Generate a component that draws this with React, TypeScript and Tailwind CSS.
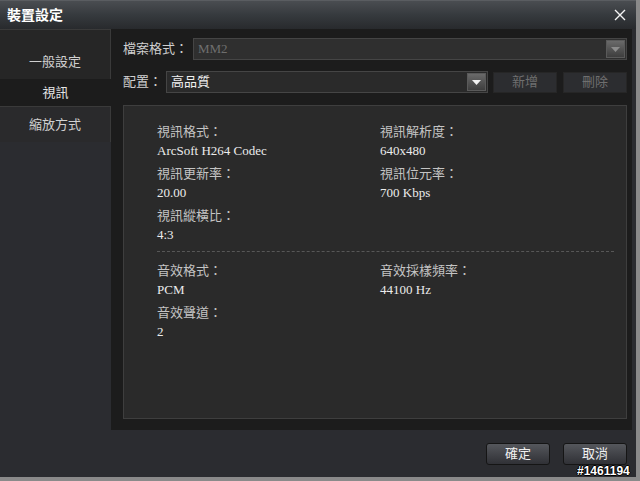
const font = { fontFamily: '"Liberation Serif", "Noto Sans CJK TC", serif' }

function Arrow({ disabled }: { disabled?: boolean }) {
  return (
    <div className="flex items-center justify-center w-[19px] h-[18px] border border-[#5a5a5a] bg-gradient-to-b from-[#6a6a6a] to-[#3e3e3e]">
      <svg width="9" height="5" viewBox="0 0 9 5">
        <path d="M0 0h9L4.5 5z" fill={disabled ? '#8c8c8c' : '#f2f2f2'} />
      </svg>
    </div>
  )
}

function Info({ label, value }: { label: string; value: string }) {
  return (
    <div className="leading-[19px]">
      <div className="text-[#c4c4c4]">{label}</div>
      <div className="text-[#ececec]">{value}</div>
    </div>
  )
}

function FooterButton({ children }: { children: string }) {
  return (
    <button className="w-[64px] h-[22px] rounded-[3px] border border-[#151515] bg-gradient-to-b from-[#55575c] to-[#303136] text-[#f0f0f0] text-[13px] flex items-center justify-center">
      {children}
    </button>
  )
}

export default function App() {
  return (
    <div className="relative w-[640px] h-[481px] bg-[#8a8a8a] overflow-hidden text-[13px]" style={font}>
      <div className="w-[636px] h-[477px] bg-[#2b2c30] flex flex-col">
        {/* title bar */}
        <div className="h-[29px] flex items-center justify-between pl-[7px] pr-[10px] bg-gradient-to-b from-[#4a4d51] via-[#363a3e] to-[#282a2d] border-t border-[#5a5d61]">
          <span className="text-white text-[14px] font-bold">裝置設定</span>
          <svg width="12" height="12" viewBox="0 0 12 12">
            <path d="M1 1l10 10M11 1L1 11" stroke="#f4f4f4" strokeWidth="1.4" />
          </svg>
        </div>

        <div className="flex h-[401px]">
          {/* sidebar */}
          <div className="w-[111px] flex flex-col text-[#d0d0d0]">
            <div className="h-[50px] bg-[#262626] border-t border-r border-[#3a3a3a] flex items-end justify-center pb-[8px]">
              一般設定
            </div>
            <div className="h-[27px] bg-[#1c1c1c] flex items-center justify-center text-[#e6e6e6]">視訊</div>
            <div className="h-[36px] bg-[#2a2a2c] border-t border-r border-[#3a3a3a] flex items-start justify-center pt-[8px]">
              縮放方式
            </div>
          </div>

          {/* main */}
          <div className="w-[521px] bg-[#1c1c1c] pl-[12px] pr-[5px] pt-[9px] flex flex-col">
            <div className="flex items-center h-[22px]">
              <span className="w-[70px] text-[#cfcfcf]">檔案格式：</span>
              <div className="flex-1 h-[22px] bg-[#2f2f2f] border border-[#454545] flex items-center justify-between pl-[4px] pr-[1px]">
                <span className="text-[#6e6e6e]">MM2</span>
                <Arrow disabled />
              </div>
            </div>
            <div className="flex items-center h-[22px] mt-[11px]">
              <span className="w-[43px] text-[#cfcfcf]">配置：</span>
              <div className="w-[322px] h-[22px] bg-[#2a2a2a] border border-[#454545] flex items-center justify-between pl-[4px] pr-[1px]">
                <span className="text-[#f0f0f0]">高品質</span>
                <Arrow />
              </div>
              <div className="ml-[5px] w-[64px] h-[21px] bg-[#2c2d30] border border-[#262626] flex items-center justify-center text-[#6f6f6f]">
                新增
              </div>
              <div className="ml-[6px] w-[64px] h-[21px] bg-[#2c2d30] border border-[#262626] flex items-center justify-center text-[#6f6f6f]">
                刪除
              </div>
            </div>

            <div className="mt-[12px] h-[314px] bg-[#2a2a2a] border border-[#3e3e3e] pl-[33px] pr-[12px] pt-[16px]">
              <div className="grid grid-cols-[223px_1fr] gap-y-[4px]">
                <Info label="視訊格式：" value="ArcSoft H264 Codec" />
                <Info label="視訊解析度：" value="640x480" />
                <Info label="視訊更新率：" value="20.00" />
                <Info label="視訊位元率：" value="700 Kbps" />
                <Info label="視訊縱橫比：" value="4:3" />
              </div>
              <div className="mt-[7px] border-t border-dashed border-[#575757]" />
              <div className="mt-[9px] grid grid-cols-[223px_1fr] gap-y-[4px]">
                <Info label="音效格式：" value="PCM" />
                <Info label="音效採樣頻率：" value="44100 Hz" />
                <Info label="音效聲道：" value="2" />
              </div>
            </div>
          </div>
        </div>

        {/* footer */}
        <div className="flex-1 flex justify-end items-start pt-[13px] pr-[9px] gap-[13px]">
          <FooterButton>確定</FooterButton>
          <FooterButton>取消</FooterButton>
        </div>
      </div>

      <div
        className="absolute left-[577px] top-[463px] text-white text-[12px] font-bold leading-[16px]"
        style={{ fontFamily: '"Liberation Sans", sans-serif', textShadow: '1px 0 #000, -1px 0 #000, 0 1px #000, 0 -1px #000' }}
      >
        #1461194
      </div>
    </div>
  )
}
